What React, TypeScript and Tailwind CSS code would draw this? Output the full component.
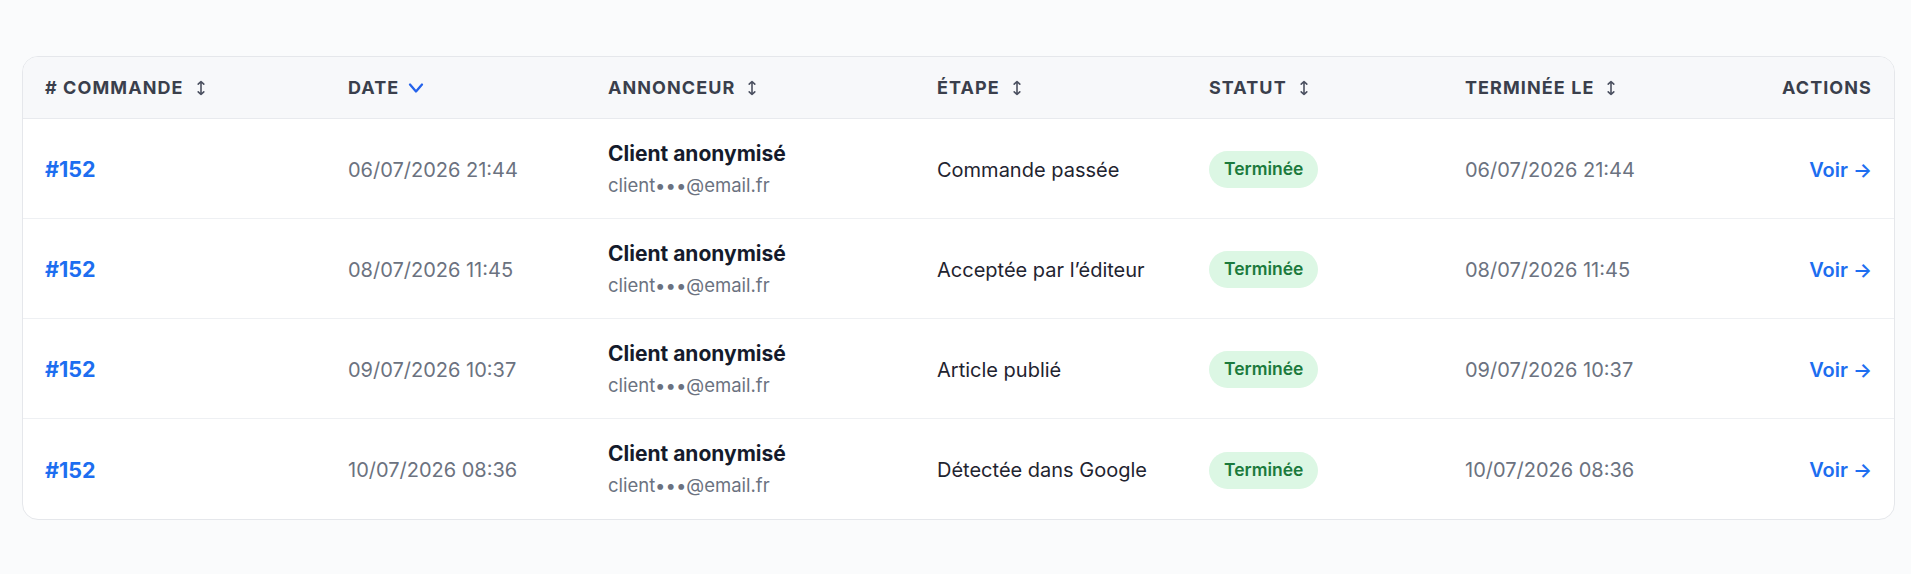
import React from "react";

const rows = [
  { date: "06/07/2026 21:44", step: "Commande passée" },
  { date: "08/07/2026 11:45", step: "Acceptée par l’éditeur" },
  { date: "09/07/2026 10:37", step: "Article publié" },
  { date: "10/07/2026 08:36", step: "Détectée dans Google" },
];

const cols = "grid grid-cols-[303px_260px_329px_272px_256px_1fr_auto] items-center pl-[22px] pr-[22px]";

function SortIcon() {
  return (
    <svg width="10" height="16" viewBox="0 0 10 16" fill="none" className="ml-[12px] shrink-0">
      <path d="M5 1.5v13M2.2 4.2L5 1.5l2.8 2.7M2.2 11.8L5 14.5l2.8-2.7" stroke="#4b5060" strokeWidth="1.6" strokeLinecap="round" strokeLinejoin="round" />
    </svg>
  );
}

function ChevronIcon() {
  return (
    <svg width="16" height="12" viewBox="0 0 16 12" fill="none" className="ml-[9px] shrink-0">
      <path d="M2 2.5l6 7 6-7" stroke="#2563eb" strokeWidth="2.3" strokeLinecap="round" strokeLinejoin="round" />
    </svg>
  );
}

function Head({ label, sort, active, right }: { label: string; sort?: boolean; active?: boolean; right?: boolean }) {
  return (
    <div className={`flex items-center ${right ? "justify-end" : ""}`}>
      <span className="text-[18px] font-bold uppercase tracking-[0.06em] text-[#3a3f4c]">{label}</span>
      {active ? <ChevronIcon /> : sort ? <SortIcon /> : null}
    </div>
  );
}

export default function App() {
  return (
    <div
      className="min-h-screen bg-[#fafbfc] pl-[22px] pr-[16px] pt-[56px] pb-[56px]"
      style={{ fontFamily: "Inter, 'Noto Sans', sans-serif" }}
    >
      <div className="overflow-hidden rounded-[16px] border border-[#e5e7eb] bg-white">
        <div className={`${cols} h-[62px] border-b border-[#e8eaee] bg-[#f7f8fa]`}>
          <Head label="# Commande" sort />
          <Head label="Date" active />
          <Head label="Annonceur" sort />
          <Head label="Étape" sort />
          <Head label="Statut" sort />
          <Head label="Terminée le" sort />
          <Head label="Actions" right />
        </div>
        {rows.map((r, i) => (
          <div
            key={i}
            className={`${cols} h-[100px] ${i < rows.length - 1 ? "border-b border-[#eef0f3]" : ""}`}
          >
            <div className="pt-[2px] text-[21.5px] font-bold text-[#1d6ef0]">#152</div>
            <div className="pt-[2px] text-[20px] text-[#6b7280]">{r.date}</div>
            <div className="flex flex-col">
              <span className="text-[21px] font-bold leading-[28px] text-[#151b2c]">Client anonymisé</span>
              <span className="mt-[4px] text-[18.5px] leading-[26px] text-[#6b7280]">client•••@email.fr</span>
            </div>
            <div className="pt-[2px] text-[20px] text-[#1f2430]">{r.step}</div>
            <div className="pt-[2px]">
              <span className="inline-flex h-[37px] items-center rounded-full bg-[#dcf7e4] px-[15px] text-[17.5px] font-semibold text-[#1b7a3c]">
                Terminée
              </span>
            </div>
            <div className="pt-[2px] text-[20px] text-[#6b7280]">{r.date}</div>
            <div className="pt-[2px] text-right text-[20px] font-semibold text-[#1d6ef0]">Voir →</div>
          </div>
        ))}
      </div>
    </div>
  );
}
